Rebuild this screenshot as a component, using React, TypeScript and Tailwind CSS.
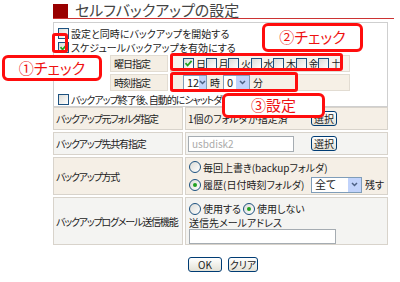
import React from 'react'

const jp = "font-['Noto_Sans_CJK_JP','Noto_Sans',sans-serif] [font-feature-settings:'palt'] whitespace-nowrap"

function Check({ on = false }: { on?: boolean }) {
  return (
    <span className="inline-flex w-[11px] h-[11px] shrink-0 items-center justify-center border border-[#1c5180] bg-gradient-to-br from-[#dcdcd7] to-white">
      {on && (
        <svg width="9" height="9" viewBox="0 0 9 9">
          <path d="M1.5 4.2 L3.6 6.5 L7.6 1.8" stroke="#21a121" strokeWidth="1.8" fill="none" />
        </svg>
      )}
    </span>
  )
}

function Radio({ on = false }: { on?: boolean }) {
  return (
    <span className="inline-flex w-[12px] h-[12px] shrink-0 items-center justify-center rounded-full border border-[#1c5180] bg-gradient-to-br from-[#dcdcd7] to-white">
      {on && <span className="w-[4px] h-[4px] rounded-full bg-[#21a121]" />}
    </span>
  )
}

function Select({ value, w }: { value: string; w: string }) {
  return (
    <span className={`inline-flex h-[16px] shrink-0 items-center justify-between border border-[#7f9db9] bg-white ${w}`}>
      <span className="pl-[3px] text-[11px] leading-none tracking-normal">{value}</span>
      <span className="flex h-[14px] w-[13px] items-center justify-center bg-[#c1d3fb]">
        <svg width="7" height="5" viewBox="0 0 7 5">
          <path d="M1 1 L3.5 3.5 L6 1" stroke="#4d6185" strokeWidth="1.5" fill="none" />
        </svg>
      </span>
    </span>
  )
}

function Btn({ label, w }: { label: string; w: string }) {
  return (
    <span className={`inline-flex h-[15px] shrink-0 items-center justify-center rounded-[3px] border border-[#003c74] bg-gradient-to-b from-white to-[#e3e1d6] text-[10px] leading-none tracking-normal ${w}`}>
      {label}
    </span>
  )
}

function Callout({ text, cls }: { text: string; cls: string }) {
  return (
    <div className={`absolute flex items-center justify-center rounded-[6px] border-[3px] border-[#ff0d0d] bg-white text-[15px] text-[#ee1111] ${cls}`}>
      {text}
    </div>
  )
}

export default function App() {
  const days = ['日', '月', '火', '水', '木', '金', '土']
  const label = 'bg-[#f5efe6] border border-[#d8d3cb] pl-[2px] flex items-center tracking-[-1.2px]'
  const label2 = 'bg-[#f4f4f2] border border-[#d8d3cb] pl-[2px] flex items-center tracking-[-1.2px]'
  return (
    <div className={`relative w-[400px] h-[282px] overflow-hidden bg-white text-[#222] ${jp}`}>
      {/* タイトル */}
      <div className="ml-[53px] mr-[6px] pt-[4px] flex items-end border-b border-[#c33] h-[19px]">
        <span className="w-[15px] h-[14px] bg-[#990000]" />
        <span className="ml-[7px] text-[15px] leading-[17px] text-[#444]">セルフバックアップの設定</span>
      </div>

      <div className="ml-[53px] w-[335px] mt-[3px]">
        {/* スケジュール */}
        <div className="border border-[#cfcfcf] pt-[3px] pl-[4px] h-[85px] text-[10px]">
          <div className="flex h-[14px] items-center gap-[2px]">
            <Check />
            <span>設定と同時にバックアップを開始する</span>
          </div>
          <div className="flex h-[14px] items-center gap-[2px]">
            <Check on />
            <span>スケジュールバックアップを有効にする</span>
          </div>
          <div className="ml-[52px] mt-[1px] w-[240px] flex flex-col gap-[2px]">
            <div className="flex h-[17px] gap-[2px]">
              <div className="w-[58px] bg-[#f4eee4] border border-[#e2dcd2] pl-[3px] flex items-center tracking-[-1px]">曜日指定</div>
              <div className="flex-1 bg-[#f8f4ee] border border-[#e2dcd2] pl-[12px] flex items-center">
                {days.map((d, i) => (
                  <span key={d} className="flex w-[22.5px] items-center gap-[2px]">
                    <Check on={i === 0} />
                    <span>{d}</span>
                  </span>
                ))}
              </div>
            </div>
            <div className="flex h-[17px] gap-[2px]">
              <div className="w-[58px] bg-[#f4eee4] border border-[#e2dcd2] pl-[3px] flex items-center tracking-[-1px]">時刻指定</div>
              <div className="flex-1 bg-[#f6f0e6] border border-[#e2dcd2] pl-[12px] flex items-center">
                <Select value="12" w="w-[24px]" />
                <span className="mx-[3px]">時</span>
                <Select value="0" w="w-[27px]" />
                <span className="ml-[3px]">分</span>
              </div>
            </div>
          </div>
          <div className="flex h-[16px] items-center gap-[2px]">
            <Check />
            <span className="tracking-[-1px]">バックアップ終了後、自動的にシャットダウンする</span>
          </div>
        </div>

        {/* 設定テーブル */}
        <div className="grid grid-cols-[130px_1fr] gap-[2px] text-[10px]">
          <div className={`h-[23px] ${label}`}>バックアップ元フォルダ指定</div>
          <div className="h-[23px] bg-[#f5efe6] border border-[#d8d3cb] pl-[2px] flex items-center">
            <span className="w-[123px] overflow-hidden">1個のフォルダが指定済</span>
            <Btn label="選択" w="w-[26px]" />
          </div>

          <div className={`h-[23px] ${label2}`}>バックアップ先共有指定</div>
          <div className="h-[23px] bg-[#f4f4f2] border border-[#d8d3cb] pl-[2px] flex items-center">
            <span className="w-[106px] h-[16px] shrink-0 border border-[#a5acb2] bg-white pl-[3px] leading-[14px] text-[#aaa]">usbdisk2</span>
            <Btn label="選択" w="ml-[17px] w-[26px]" />
          </div>

          <div className={`h-[38px] ${label}`}>バックアップ方式</div>
          <div className="h-[38px] bg-[#f5efe6] border border-[#d8d3cb] pl-[3px] flex flex-col justify-center gap-[2px]">
            <div className="flex items-center gap-[2px] h-[15px]">
              <Radio />
              <span>毎回上書き(backupフォルダ)</span>
            </div>
            <div className="flex items-center gap-[2px] h-[16px]">
              <Radio on />
              <span className="w-[106px]">履歴(日付時刻フォルダ)</span>
              <Select value="全て" w="w-[51px]" />
              <span className="ml-[1px]">残す</span>
            </div>
          </div>

          <div className={`h-[48px] ${label2}`}>バックアップログメール送信機能</div>
          <div className="h-[48px] bg-[#f4f4f2] border border-[#d8d3cb] pl-[3px] pt-[3px] flex flex-col">
            <div className="flex items-center gap-[2px] h-[15px]">
              <Radio />
              <span>使用する</span>
              <Radio on />
              <span>使用しない</span>
            </div>
            <span className="h-[13px] leading-[13px]">送信先メールアドレス</span>
            <span className="w-[147px] h-[15px] border border-[#a5acb2] bg-white" />
          </div>
        </div>

        <div className="mt-[12px] ml-[135px] flex gap-[6px]">
          <Btn label="OK" w="w-[34px]" />
          <Btn label="クリア" w="w-[30px]" />
        </div>
      </div>

      {/* 注釈 */}
      <div className="absolute left-[52px] top-[33px] w-[16px] h-[20px] rounded-[3px] border-[3px] border-[#ff0d0d]" />
      <div className="absolute left-[170px] top-[53px] w-[173px] h-[18px] rounded-[3px] border-[3px] border-[#ff0d0d]" />
      <div className="absolute left-[170px] top-[72px] w-[128px] h-[20px] rounded-[3px] border-[3px] border-[#ff0d0d]" />
      <Callout text="①チェック" cls="left-[2px] top-[55px] w-[100px] h-[26px]" />
      <Callout text="②チェック" cls="left-[262px] top-[23px] w-[101px] h-[29px]" />
      <Callout text="③設定" cls="left-[222px] top-[93px] w-[103px] h-[25px]" />
    </div>
  )
}
